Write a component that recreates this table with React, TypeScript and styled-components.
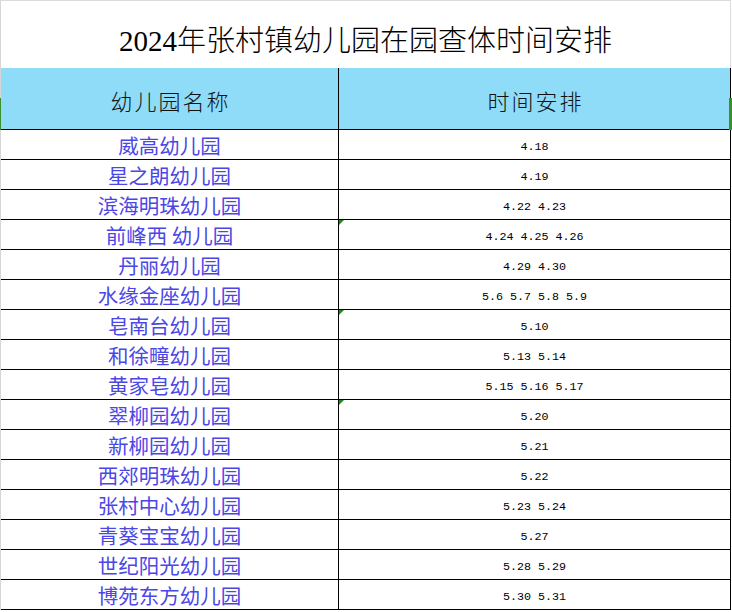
import React from 'react';
import styled, { createGlobalStyle } from 'styled-components';

type Row = {
  name: string;
  dates: string;
  flagged?: boolean;
};

const rows: Row[] = [
  { name: '威高幼儿园', dates: '4.18' },
  { name: '星之朗幼儿园', dates: '4.19' },
  { name: '滨海明珠幼儿园', dates: '4.22 4.23' },
  { name: '前峰西 幼儿园', dates: '4.24 4.25 4.26', flagged: true },
  { name: '丹丽幼儿园', dates: '4.29 4.30' },
  { name: '水缘金座幼儿园', dates: '5.6 5.7 5.8 5.9' },
  { name: '皂南台幼儿园', dates: '5.10', flagged: true },
  { name: '和徐疃幼儿园', dates: '5.13 5.14' },
  { name: '黄家皂幼儿园', dates: '5.15 5.16 5.17' },
  { name: '翠柳园幼儿园', dates: '5.20', flagged: true },
  { name: '新柳园幼儿园', dates: '5.21' },
  { name: '西郊明珠幼儿园', dates: '5.22' },
  { name: '张村中心幼儿园', dates: '5.23 5.24' },
  { name: '青葵宝宝幼儿园', dates: '5.27' },
  { name: '世纪阳光幼儿园', dates: '5.28 5.29' },
  { name: '博苑东方幼儿园', dates: '5.30 5.31' },
];

const GlobalStyle = createGlobalStyle`
  html, body {
    margin: 0;
    padding: 0;
    background: #ffffff;
  }
  body {
    font-family: "Noto Sans CJK SC", sans-serif;
  }
`;

const Sheet = styled.div`
  width: 731px;
  box-sizing: border-box;
  border-left: 1px solid #d6d6d6;
  border-top: 1px solid #dcdcdc;
`;

const Title = styled.h1`
  margin: 0;
  height: 67px;
  box-sizing: border-box;
  padding-top: 6px;
  border-right: 1px solid #dcdcdc;
  display: flex;
  align-items: center;
  justify-content: center;
  font-family: "Liberation Serif", "Noto Sans CJK SC", serif;
  font-size: 29px;
  font-weight: 300;
  color: #000000;
`;

const Table = styled.div`
  display: grid;
  grid-template-columns: 338px 391px;
  border-right: 1px solid #000000;
`;

const HeaderRow = styled.div`
  display: contents;
`;

const HeadCell = styled.div<{ $first?: boolean }>`
  position: relative;
  height: 62px;
  box-sizing: border-box;
  padding-top: 3px;
  background: #8edcf8;
  border-bottom: 1px solid #000000;
  border-right: ${({ $first }) => ($first ? '1px solid #000000' : 'none')};
  display: flex;
  align-items: center;
  justify-content: center;
  font-size: 22px;
  font-weight: 300;
  color: #111111;
  letter-spacing: 2px;
  text-indent: 2px;
`;

const EdgeMark = styled.span<{ $side: 'left' | 'right' }>`
  position: absolute;
  top: 30px;
  height: 32px;
  width: 2px;
  background: #3c8f2a;
  ${({ $side }) => ($side === 'left' ? 'left: -2px;' : 'right: -2px; width: 3px;')}
`;

const NameCell = styled.div`
  height: 30px;
  box-sizing: border-box;
  border-bottom: 1px solid #000000;
  border-right: 1px solid #000000;
  display: flex;
  align-items: center;
  justify-content: center;
  padding-top: 1px;
  font-size: 20.5px;
  color: #4b47e6;
  white-space: pre;
`;

const DateCell = styled.div`
  position: relative;
  height: 30px;
  box-sizing: border-box;
  border-bottom: 1px solid #000000;
  display: flex;
  align-items: center;
  justify-content: center;
  padding-top: 4px;
  font-family: "Liberation Mono", monospace;
  font-size: 11.7px;
  color: #000000;
  white-space: pre;
`;

const ErrorFlag = styled.span`
  position: absolute;
  top: 0;
  left: 0;
  width: 0;
  height: 0;
  border-top: 5px solid #1e8a1e;
  border-right: 5px solid transparent;
`;

export default function App() {
  return (
    <>
      <GlobalStyle />
      <Sheet>
        <Title>2024年张村镇幼儿园在园查体时间安排</Title>
        <Table>
          <HeaderRow>
            <HeadCell $first>
              <EdgeMark $side="left" />
              幼儿园名称
            </HeadCell>
            <HeadCell>
              时间安排
              <EdgeMark $side="right" />
            </HeadCell>
          </HeaderRow>
          {rows.map((row) => (
            <React.Fragment key={row.name}>
              <NameCell>{row.name}</NameCell>
              <DateCell>
                {row.flagged && <ErrorFlag />}
                {row.dates}
              </DateCell>
            </React.Fragment>
          ))}
        </Table>
      </Sheet>
    </>
  );
}
